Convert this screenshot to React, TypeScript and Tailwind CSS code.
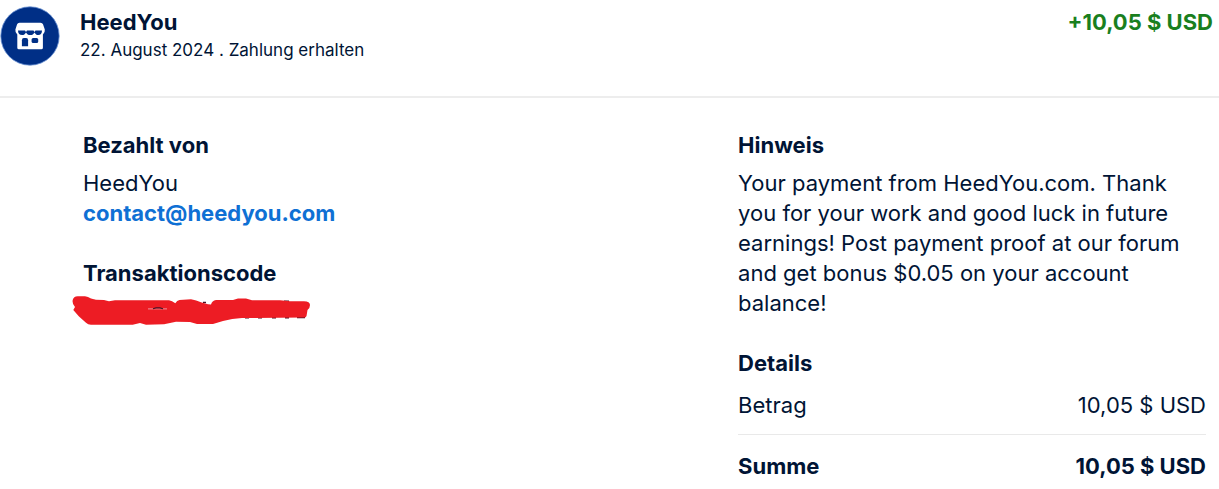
import React from "react";

function StoreIcon() {
  return (
    <svg viewBox="0 0 60 60" className="size-15 shrink-0" role="img" aria-label="Store">
      <circle cx="30" cy="30" r="29.2" fill="#002f86" stroke="#6f96d6" strokeWidth="0.8" />
      <path
        d="M19.500 16.800h21q1.900 0 2.500 1.500l1.800 5.200q.5 3-1.900 5V41.700q0 1.600-1.600 1.600H18.900q-1.600 0-1.600-1.600V28.500q-2.400-2-1.900-5l1.700-5.200q.6-1.500 2.400-1.500z"
        fill="#fff"
      />
      <path
        d="M18 24.600h7l1 1.400 1-1.400h6.500l1 1.400 1-1.400h6.500c0 3-1.500 4.500-3.700 4.500-1.600 0-2.900-.9-3.800-2.600-.9 1.700-2.200 2.600-4.200 2.600s-3.400-.9-4.300-2.600c-.9 1.700-2.200 2.600-3.900 2.600-2.500 0-4.100-1.500-4.100-4.500z"
        fill="#002f86"
      />
      <path d="M21.900 40.200v-6q0-2.200 2-2.200h2.200q2 0 2 2.200v6z" fill="#002f86" />
      <rect x="31.600" y="31.900" width="6.600" height="5" rx="1.500" fill="#002f86" />
    </svg>
  );
}

function RedactedCode() {
  return (
    <svg
      viewBox="71 296 240 30"
      className="-ml-3 h-[30px] w-60"
      role="img"
      aria-label="Transaktionscode"
    >
      <path
        d="M203 302.500h3M284 301.200h5M245 317.800h4M258 317.800h4M272 317.800h4M285 317.800h4M297 317.600h8"
        fill="none"
        stroke="#461326"
        strokeWidth="1.400"
      />
      <path
        d="M72.700 300Q73.500 296.500 77.700 296.300L85 296.300Q88 296.500 91 298.500L96 299.800 104 300 109 301.300 115 300.300H169Q172 300.700 175.300 303.300 177 300.300 179.500 300L191 299.300Q196 300 201.700 302.400L208 304.300 211 304.500Q212 300.500 216 300H233L238 298.400H246L252 300.300H280L290 301.300H304Q310 301.500 310 305 310 308 307.500 310L306.500 316Q306 317.500 304 317.500L242 318Q232 318.500 223 321L213 324H197L190 322 176 321.700 164 324.300 146 324.700 140 323 132.700 324.700H91Q88 324.500 86 322.700L79 316.500 73.300 310 75 307Q72 304 72.700 300z"
        fill="#ed1c24"
      />
      <path d="M148 308.900h19" fill="none" stroke="#f1939c" strokeWidth="1" />
      <path d="M153 308.700l3-.8h4l3 .8" fill="none" stroke="#461326" strokeWidth="1.100" />
    </svg>
  );
}

export default function App() {
  return (
    <main className="bg-white font-['Inter',sans-serif] text-[22px] leading-[30px] text-[#001435]">
      <header className="flex items-start border-b-2 border-[#ededed] pt-1.5 pb-[30px]">
        <StoreIcon />
        <div className="ml-5 flex-1 pt-px">
          <h1 className="font-bold">HeedYou</h1>
          <p className="text-[17px] leading-[26px]">22. August 2024 . Zahlung erhalten</p>
        </div>
        <p className="pt-px pr-1.5 font-bold text-[#1a7f1e]">+10,05 $ USD</p>
      </header>

      <div className="grid grid-cols-[7fr_5fr] pt-8 pr-[13px] pl-[83px]">
        <div>
          <section>
            <h2 className="mb-2 font-bold">Bezahlt von</h2>
            <p>HeedYou</p>
            <a href="mailto:contact@heedyou.com" className="block font-bold text-[#0f70d4]">
              contact@heedyou.com
            </a>
          </section>
          <section className="mt-[30px]">
            <h2 className="mb-2 font-bold">Transaktionscode</h2>
            <RedactedCode />
          </section>
        </div>

        <div>
          <section>
            <h2 className="mb-2 font-bold">Hinweis</h2>
            <p>
              Your payment from HeedYou.com. Thank you for your work and good luck in future
              earnings! Post payment proof at our forum and get bonus $0.05 on your account balance!
            </p>
          </section>
          <section className="mt-[30px]">
            <h2 className="mb-3 font-bold">Details</h2>
            <dl>
              <div className="flex justify-between border-b border-[#e9e9e9] pb-3.5">
                <dt>Betrag</dt>
                <dd>10,05 $ USD</dd>
              </div>
              <div className="flex justify-between pt-4 font-bold">
                <dt>Summe</dt>
                <dd>10,05 $ USD</dd>
              </div>
            </dl>
          </section>
        </div>
      </div>
    </main>
  );
}
